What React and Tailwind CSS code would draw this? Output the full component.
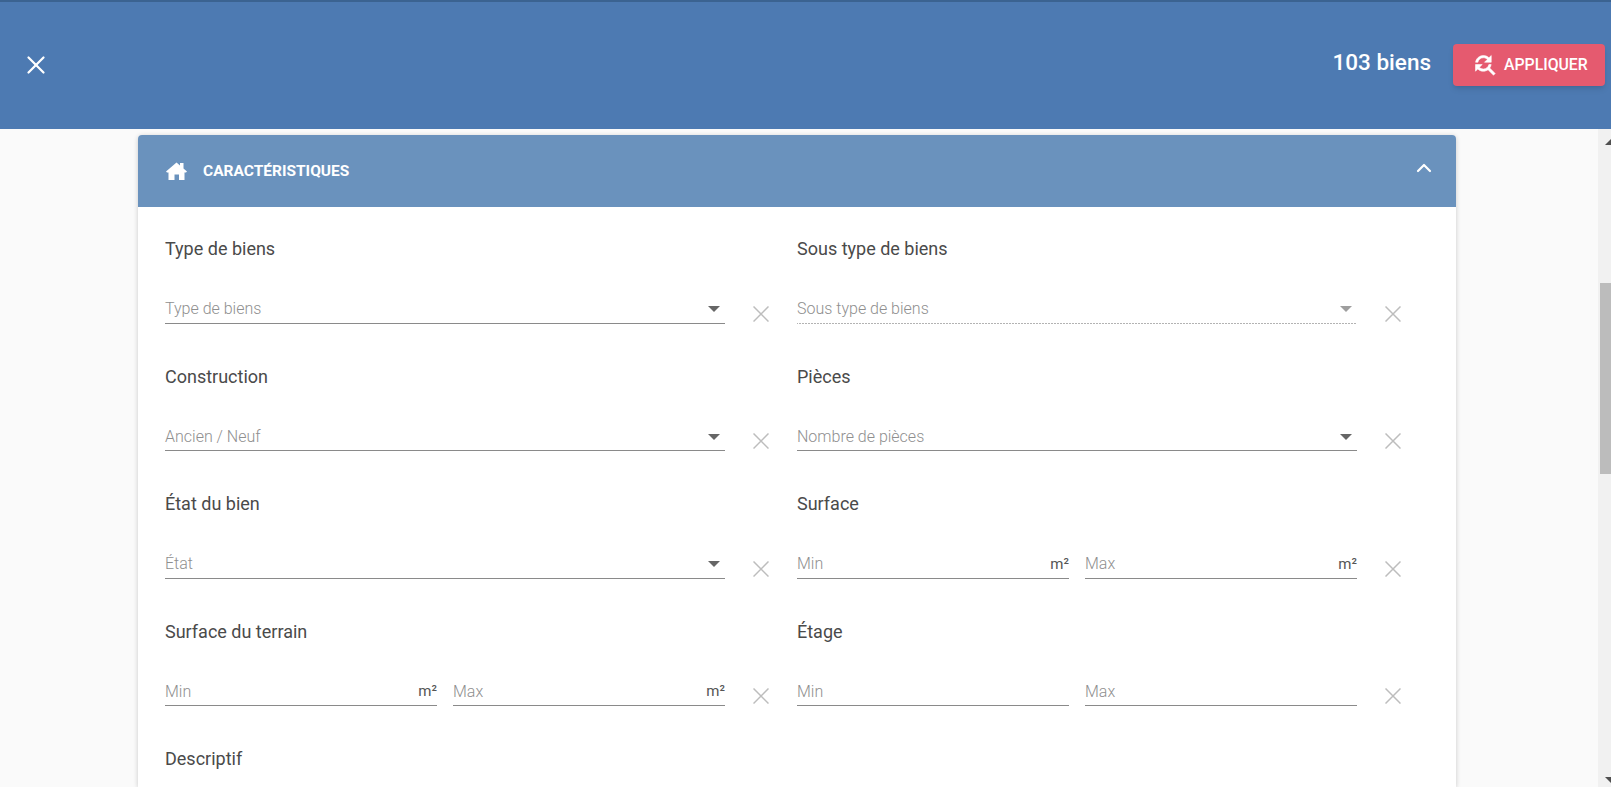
import { ChevronUp, X } from "lucide-react";

const roboto = { fontFamily: "Roboto, sans-serif" };

function ClearIcon() {
  return (
    <svg viewBox="0 0 16 16" className="w-4 h-4 text-[#bdbdbd] shrink-0" fill="none" stroke="currentColor" strokeWidth="1.5">
      <path d="M0.5 0.5 L15.5 15.5 M15.5 0.5 L0.5 15.5" />
    </svg>
  );
}

// material "find_replace"
function ApplyIcon() {
  return (
    <svg viewBox="0 0 24 24" className="w-[27px] h-[27px] shrink-0" fill="white" stroke="white" strokeWidth="0.5">
      <path d="M11 6c1.38 0 2.63.56 3.54 1.46L12 10h6V4l-2.05 2.05C14.68 4.78 12.93 4 11 4c-3.53 0-6.43 2.61-6.92 6H6.1c.46-2.28 2.48-4 4.9-4zm5.64 9.14c.66-.9 1.12-1.97 1.28-3.14H15.9c-.46 2.28-2.48 4-4.9 4-1.38 0-2.63-.56-3.54-1.46L10 12H4v6l2.05-2.05C7.32 17.22 9.07 18 11 18c1.55 0 2.98-.51 4.14-1.36L20 21.49 21.49 20l-4.85-4.86z" />
    </svg>
  );
}

function HomeIcon() {
  return (
    <svg viewBox="0 0 21 18" className="w-[21px] h-[18px] shrink-0" fill="white" fillRule="evenodd">
      <path d="M0 9.5 L10.5 0.5 L14 3.5 V1 H17.5 V6.5 L21 9.5 L20 10.5 H18.5 V18 H13 V12.5 H8.5 V18 H2.5 V10.5 H1 Z" />
    </svg>
  );
}

function Select({ placeholder, dotted }) {
  return (
    <div
      className={`flex-1 h-[30px] pt-[2px] flex items-center justify-between text-base font-light text-[#8f8f8f] ${
        dotted
          ? "pb-[1px] bg-[linear-gradient(to_right,#666666_1px,transparent_1px)] bg-[length:3px_1px] bg-bottom bg-repeat-x"
          : "border-b border-[#8a8a8a]"
      }`}
    >
      <span>{placeholder}</span>
      <span className={`w-0 h-0 mr-[5px] border-x-[6px] border-x-transparent border-t-[6px] ${dotted ? "border-t-[#9e9e9e]" : "border-t-[#666666]"}`} />
    </div>
  );
}

function NumberInput({ placeholder, unit }) {
  return (
    <div className="flex-1 h-[30px] pt-[2px] flex items-center justify-between text-base font-light border-b border-[#8a8a8a]">
      <span className="text-[#8f8f8f]">{placeholder}</span>
      {unit && <span className="text-[15px] font-normal text-[#555555]">m²</span>}
    </div>
  );
}

function Label({ children }) {
  return <div className="h-[22px] flex items-center text-lg text-[#4a4a4a]">{children}</div>;
}

function Field({ label, children }) {
  return (
    <div className="min-w-0">
      <Label>{label}</Label>
      <div className="mt-[33.5px] flex items-end">
        <div className="flex-1 flex gap-4">{children}</div>
        <div className="w-[44px] pl-[28px] pb-[2px]">
          <ClearIcon />
        </div>
      </div>
    </div>
  );
}

export default function App() {
  return (
    <div className="h-[787px] flex flex-col overflow-hidden bg-[#fafafa]" style={roboto}>
      <div className="relative z-10 h-[129px] shrink-0 flex items-center justify-between bg-[#4d7ab2] border-t-2 border-[#3b6391] pb-[2px] pl-[21px] pr-[6px]">
        <X className="w-[30px] h-[30px] text-white" strokeWidth={1.8} />
        <div className="flex items-center">
          <span className="text-[22.5px] font-medium text-white mr-[22px] -mt-[3px]">103 biens</span>
          <button className="w-[152px] h-[42px] flex items-center pl-[18px] gap-[6px] rounded bg-[#e55a6f] text-white text-[15.8px] font-medium shadow-md">
            <ApplyIcon />
            APPLIQUER
          </button>
        </div>
      </div>

      <div className="flex-1 min-h-0 flex">
        <div className="flex-1 min-w-0 pl-[138px] pr-[142px] pt-[6px]">
          <div className="h-full bg-white rounded-t shadow-[0_1px_5px_rgba(0,0,0,0.2)]">
            <div className="h-[72px] flex items-center justify-between rounded-t bg-[#6a92bd] text-white pl-[28px] pr-[20px]">
              <div className="flex items-center gap-[16px]">
                <HomeIcon />
                <span className="text-[15.5px] font-bold pt-[1px]">CARACTÉRISTIQUES</span>
              </div>
              <ChevronUp className="w-[24px] h-[24px] -mt-[6px]" strokeWidth={2.2} />
            </div>

            <div className="pl-[27px] pr-[55px] pt-[31px] grid grid-cols-2 gap-x-[28px] gap-y-[42px]">
              <Field label="Type de biens"><Select placeholder="Type de biens" /></Field>
              <Field label="Sous type de biens"><Select placeholder="Sous type de biens" dotted /></Field>
              <Field label="Construction"><Select placeholder="Ancien / Neuf" /></Field>
              <Field label="Pièces"><Select placeholder="Nombre de pièces" /></Field>
              <Field label="État du bien"><Select placeholder="État" /></Field>
              <Field label="Surface">
                <NumberInput placeholder="Min" unit />
                <NumberInput placeholder="Max" unit />
              </Field>
              <Field label="Surface du terrain">
                <NumberInput placeholder="Min" unit />
                <NumberInput placeholder="Max" unit />
              </Field>
              <Field label="Étage">
                <NumberInput placeholder="Min" />
                <NumberInput placeholder="Max" />
              </Field>
              <Label>Descriptif</Label>
            </div>
          </div>
        </div>

        {/* scrollbar, clipped by the window on its right side */}
        <div className="w-[13px] shrink-0 flex flex-col bg-[#f1f1f1] pt-[10px] pb-[4px]">
          <span className="self-end w-0 h-0 border-l-[6px] border-l-transparent border-b-[6px] border-b-[#505050]" />
          <div className="ml-[2px] mt-[138px] h-[191px] bg-[#bcbcbc]" />
          <div className="flex-1" />
          <span className="self-end w-0 h-0 border-l-[6px] border-l-transparent border-t-[6px] border-t-[#505050]" />
        </div>
      </div>
    </div>
  );
}
